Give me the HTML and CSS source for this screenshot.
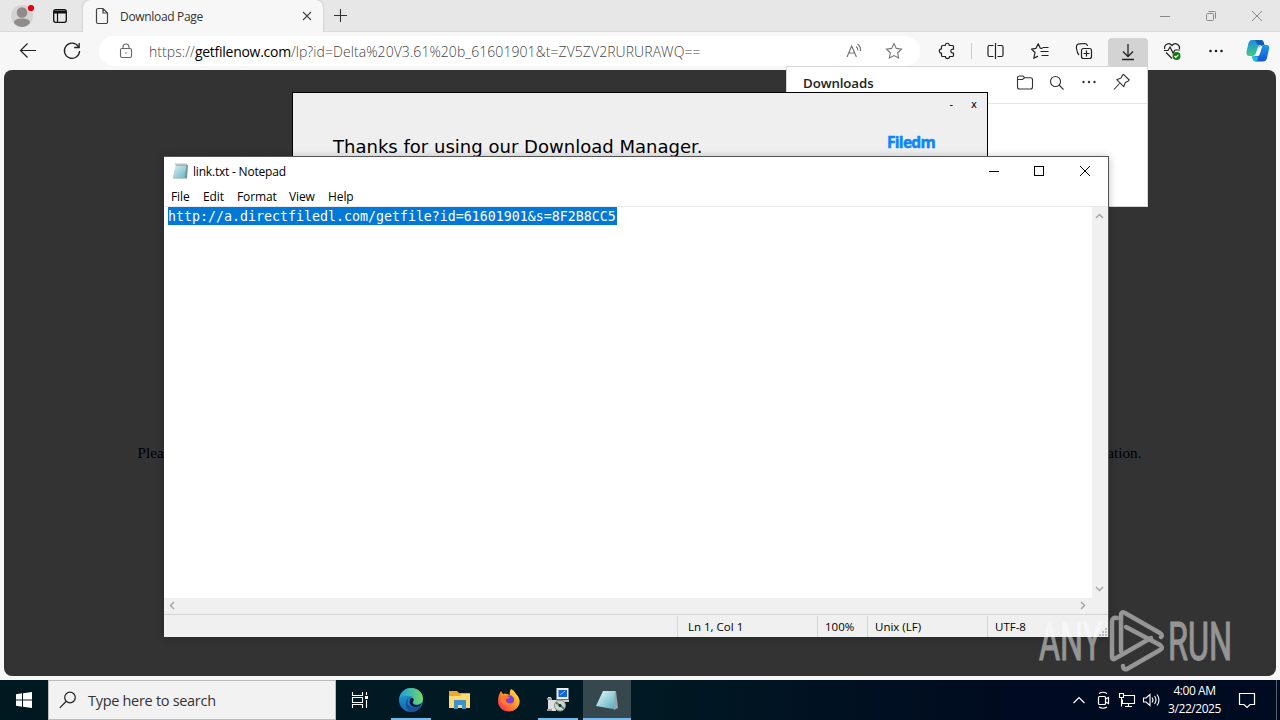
FILE: index.html
```html
<!DOCTYPE html>
<html lang="en">
<head>
<meta charset="utf-8">
<title>Download Page</title>
<link rel="stylesheet" href="styles.css">
</head>
<body>
<div class="desktop">
  <main class="browser">
    <div class="tabstrip">
      <svg class="profile" width="24" height="28" viewBox="0 0 24 28"><circle cx="11" cy="16" r="11" fill="#d5d3d2"/><circle cx="11" cy="12.500" r="5.300" fill="#8f8c8b"/><path d="M3 23c0-3.500 3.500-4.500 8-4.500s8 1 8 4.500c-2 2.500-5 4-8 4s-6-1.500-8-4z" fill="#8f8c8b"/><circle cx="20" cy="8" r="3.100" fill="#e3000f"/></svg>
      <svg class="workspaces" width="16" height="16" viewBox="0 0 16 16" fill="none" stroke="#111"><rect x="1.700" y="1.700" width="12.600" height="12.600" rx="2" stroke-width="1.300"/><path d="M2 4h12" stroke-width="3"/><path d="M5.500 4v10" stroke-width="1.200"/></svg>
      <div class="tab">
        <svg width="14" height="18" viewBox="0 0 14 18" fill="none" stroke="#444" stroke-width="1.200"><path d="M3 1.500h5l4.500 4.500v9a1.500 1.500 0 0 1-1.500 1.500H3A1.500 1.500 0 0 1 1.500 15V3A1.500 1.500 0 0 1 3 1.500zM8 1.500V6h4.500"/></svg>
        <span class="tab-title">Download Page</span>
        <svg class="tab-close" width="10" height="10" viewBox="0 0 10 10" stroke="#444" stroke-width="1.100"><path d="M1 1l8 8M9 1l-8 8"/></svg>
      </div>
      <svg class="new-tab" width="15" height="15" viewBox="0 0 15 15" stroke="#333" stroke-width="1.100"><path d="M7.500 1v13M1 7.500h13"/></svg>
      <div class="window-buttons">
        <svg width="46" height="32" viewBox="0 0 46 32" stroke="#888"><path d="M18 16.500h10"/></svg>
        <svg width="46" height="32" viewBox="0 0 46 32" fill="none" stroke="#888"><rect x="18.500" y="13.500" width="7" height="7" rx="1"/><path d="M20.500 11.500h6q1 0 1 1v6"/></svg>
        <svg width="46" height="32" viewBox="0 0 46 32" stroke="#888"><path d="M18 11l10 10M28 11l-10 10"/></svg>
      </div>
    </div>
    <div class="toolbar">
      <svg class="nav" width="44" height="38" viewBox="0 0 44 38" fill="none" stroke="#222" stroke-width="1.200"><path d="M36 18.500H20.500M27.500 11.500l-7 7 7 7"/></svg>
      <svg class="nav" width="44" height="38" viewBox="0 0 44 38" fill="none" stroke="#222" stroke-width="1.300"><path d="M34.300 14.500A7.600 7.600 0 1 0 35.600 19M35.200 11v4.500h-5"/></svg>
      <div class="address">
        <svg class="lock" width="14" height="16" viewBox="0 0 14 16" fill="none" stroke="#666" stroke-width="1.100"><rect x="1.500" y="5.500" width="11" height="9" rx="1.500"/><path d="M4 5.500V4a3 3 0 0 1 6 0v1.500"/><circle cx="7" cy="10" r=".8" fill="#666" stroke="none"/></svg>
        <span class="url">https://<b>getfilenow.com</b>/lp?id=Delta%20V3.61%20b_61601901&amp;t=ZV5ZV2RURURAWQ==</span>
        <svg class="read" width="18" height="16" viewBox="0 0 18 16" fill="none" stroke="#707070" stroke-width="1.100"><path d="M2 14L6.700 3 11.400 14M3.700 10h6"/><path d="M11 3.500q2 1.500 2 4M12.500 1q3.500 2.500 3 7"/></svg>
        <svg class="star" width="18" height="18" viewBox="0 0 18 18" fill="none" stroke="#777" stroke-width="1.100"><path d="M9 1.500l2.300 4.900 5.200.7-3.800 3.700.9 5.300L9 13.600l-4.600 2.500.9-5.300-3.800-3.700 5.200-.7z"/></svg>
      </div>
      <svg class="tool ext" width="44" height="38" viewBox="0 0 44 38" fill="none" stroke="#222" stroke-width="1.200" stroke-linejoin="round"><path d="M17.500 13.500h2.800c-.5-3 4.400-3 3.900 0h3.300q1 0 1 1v2.700c-3.600-.6-3.600 4.300 0 3.800v2.500q0 1-1 1h-3c.4 2.700-4.500 2.700-4 0h-3q-1 0-1-1V21c-2.900.4-2.900-4.400 0-4v-2.500q0-1 1-1z"/></svg>
      <i class="divider"></i>
      <svg class="tool" width="44" height="38" viewBox="0 0 44 38" fill="none" stroke="#222" stroke-width="1.200"><path d="M20.500 13.500h-4q-1.500 0-1.500 1.500v8q0 1.500 1.500 1.500h4M24.500 13.500h4q1.500 0 1.500 1.500v8q0 1.500-1.500 1.500h-4M22.500 11v16"/></svg>
      <svg class="tool" width="45" height="38" viewBox="0 0 45 38" fill="none" stroke="#222" stroke-width="1.200" stroke-linejoin="round"><path d="M25.500 16.600l-2.200-.4-2.100-4.500-2.200 4.600-4.500.8 3.500 3.400-1.200 5.800 4.200-2.200M25.500 15.500h6M23.500 19.500h8M24.500 23.500h7"/></svg>
      <svg class="tool" width="44" height="38" viewBox="0 0 44 38" fill="none" stroke="#222" stroke-width="1.200"><rect x="19.500" y="16.500" width="10" height="10" rx="2"/><path d="M24.500 18.500v6M21.500 21.500h6M17 23c-1-1-2-3-2.500-6.500-.5-3 .5-4.500 3-4.700l5-.3q2.500 0 3 2.500"/></svg>
      <svg class="tool active" width="40" height="31" viewBox="0 0 40 31" fill="none" stroke="#222" stroke-width="1.300"><path d="M20 6V18.500M15 13.500l5 5 5-5M14 21.500h12"/></svg>
      <svg class="tool" width="44" height="38" viewBox="0 0 44 38" fill="none" stroke="#222" stroke-width="1.200"><path d="M14.700 17c-1-4 4-7.500 7.300-3.500 3.300-4 8.300-.5 7.500 3.500M16 20.500l6 6M14 18.500h4l2-3.500 3 6 2-3h5"/><circle cx="26.500" cy="24" r="4" fill="#107c10" stroke="none"/><path d="M24.500 24l1.300 1.300 2.500-2.500" stroke="#fff"/></svg>
      <svg class="tool" width="44" height="38" viewBox="0 0 44 38" fill="#222"><circle cx="16.500" cy="19" r="1.300"/><circle cx="22" cy="19" r="1.300"/><circle cx="27.500" cy="19" r="1.300"/></svg>
      <svg class="tool copilot" width="40" height="38" viewBox="0 0 40 38"><defs><linearGradient id="cpa" x2="0" y2="1"><stop stop-color="#1b8fdc"/><stop offset="1" stop-color="#3fcb86"/></linearGradient><linearGradient id="cpb" x2="0" y2="1"><stop stop-color="#1f9ae9"/><stop offset="1" stop-color="#1654d0"/></linearGradient></defs><path d="M14 8h9q2 0 2.500 2l1 3h-4q-2 0-3 3l-1.500 5q-1 3-3.500 3h-3q-3.500 0-3-4l2-9q1-3 3.500-3z" fill="url(#cpa)"/><path d="M17 8h6q2 0 2.500 2l1 3h-5q-2 0-3-2z" fill="#155bb2"/><path d="M26 13h2q4 0 3 4l-2 9q-1 3.500-4 3.500h-7q-2.500 0-3-2l-1-3h2q2 0 3-3.500l1.500-5q1-3 3-3z" fill="url(#cpb)"/><path d="M14 24.500h6l-1 5h-1q-2.500 0-3-2z" fill="#22bde0"/><path d="M22.500 14h1.800l-2.300 7.500q-.6 2.500-2.500 2.500h-2l2.500-7z" fill="#fff"/></svg>
    </div>
    <div class="page"><p class="notice"><span>Please</span><span>installation.</span></p></div>
  </main>

  <section class="downloads">
    <header class="downloads-head">
      <h2>Downloads</h2>
      <svg width="32" height="32" viewBox="0 0 32 32" fill="none" stroke="#333" stroke-width="1.100"><path d="M8.500 11q0-2 2-2h3q1 0 1.500 1l.5.800h6q2 0 2 2V20q0 2-2 2h-11q-2 0-2-2zM8.500 12.500h5l2-1.700"/></svg>
      <svg width="32" height="32" viewBox="0 0 32 32" fill="none" stroke="#333" stroke-width="1.100"><circle cx="14.500" cy="14.500" r="5"/><path d="M18 18l4.500 4.500"/></svg>
      <svg width="32" height="32" viewBox="0 0 32 32" fill="#333"><circle cx="10.500" cy="15" r="1.200"/><circle cx="16" cy="15" r="1.200"/><circle cx="21.500" cy="15" r="1.200"/></svg>
      <svg width="34" height="32" viewBox="0 0 34 32" fill="none" stroke="#333" stroke-width="1.100" stroke-linejoin="round"><path d="M18.500 7.300l5.700 5.700-1.200 1.300-2.700 1.200-1.600 4.200-7-7 4.300-1.600 1.300-2.600zM14.500 16.500L9 22.500"/></svg>
    </header>
  </section>

  <section class="manager">
    <div class="manager-buttons"><span>-</span><span>x</span></div>
    <div class="manager-body"><h1>Thanks for using our Download Manager.</h1><span class="brand">Filedm</span></div>
  </section>

  <section class="notepad">
    <div class="np-title">
      <svg width="17" height="17" viewBox="0 0 17 17"><defs><linearGradient id="np" x2="1" y2="1"><stop stop-color="#d9f0f0"/><stop offset="1" stop-color="#6ab5c0"/></linearGradient></defs><path d="M4 2h12l-1 13.500H1.500z" fill="#6f9599"/><path d="M3.500 2.500h11L12.500 15H.8z" fill="url(#np)"/><path d="M4 2v-1.500M6 2V.5M8 2V.5M10 2V.5M12 2V.5M14 2V.5" stroke="#666" stroke-width=".8"/></svg>
      <span>link.txt - Notepad</span>
      <div class="np-buttons">
        <svg width="45" height="28" viewBox="0 0 45 28" stroke="#000"><path d="M17 13.500h10"/></svg>
        <svg width="46" height="28" viewBox="0 0 46 28" fill="none" stroke="#000"><rect x="17.500" y="8.500" width="9" height="9"/></svg>
        <svg width="45" height="28" viewBox="0 0 45 28" stroke="#000" stroke-width="1"><path d="M17 8l10 10M27 8l-10 10"/></svg>
      </div>
    </div>
    <nav class="np-menu"><span class="m-file">File</span><span class="m-edit">Edit</span><span class="m-format">Format</span><span class="m-view">View</span><span class="m-help">Help</span></nav>
    <div class="np-main">
      <div class="np-text"><span class="selection">http://a.directfiledl.com/getfile?id=61601901&amp;s=8F2B8CC5</span></div>
      <div class="vscroll">
        <svg width="9" height="6" viewBox="0 0 9 6" fill="none" stroke="#a6a6a6" stroke-width="1.500"><path d="M1 5l3.500-3.500L8 5"/></svg>
        <svg width="9" height="6" viewBox="0 0 9 6" fill="none" stroke="#a6a6a6" stroke-width="1.500"><path d="M1 1l3.500 3.500L8 1"/></svg>
      </div>
    </div>
    <div class="hscroll">
      <svg width="6" height="9" viewBox="0 0 6 9" fill="none" stroke="#a6a6a6" stroke-width="1.500"><path d="M5 1L1.500 4.500 5 8"/></svg>
      <svg width="6" height="9" viewBox="0 0 6 9" fill="none" stroke="#a6a6a6" stroke-width="1.500"><path d="M1 1l3.500 3.500L1 8"/></svg>
    </div>
    <footer class="np-status"><span class="s-pos">Ln 1, Col 1</span><span class="s-zoom">100%</span><span class="s-eol">Unix (LF)</span><span class="s-enc">UTF-8</span>
      <svg width="9" height="9" viewBox="0 0 9 9" fill="#bbb"><path d="M6 0h2v2H6zM6 3h2v2H6zM3 3h2v2H3zM0 6h2v2H0zM3 6h2v2H3zM6 6h2v2H6z"/></svg>
    </footer>
  </section>

  <svg class="watermark" width="240" height="73" viewBox="0 0 240 73">
    <g fill="#fff" stroke="#fff" stroke-width="1.100" font-family="Roboto, sans-serif" font-size="53"><text x="4" y="53" textLength="63" lengthAdjust="spacingAndGlyphs">ANY</text><text x="133" y="53" textLength="64" lengthAdjust="spacingAndGlyphs">RUN</text></g>
    <g fill="none" stroke="#fff" stroke-width="4.500" stroke-linejoin="round" stroke-linecap="round"><path d="M82 11q-5-1-5 4v34q0 5 4 2l35-20"/><path d="M86 44V8q0-4 4-2l35 20q3 2 1 4"/><path d="M91 20l34 18q4 3 0 5L92 62q-4 1-4-3"/></g>
  </svg>

  <footer class="taskbar">
    <div class="start"><svg width="16" height="16" viewBox="0 0 16 16" fill="#fff"><path d="M0 2.200L6 1.300V7.500H0zM7 1.200L16 0V7.500H7zM0 8.500h6v6.200L0 13.800zM7 8.500h9V16l-9-1.200z"/></svg></div>
    <div class="search"><svg width="18" height="18" viewBox="0 0 18 18" fill="none" stroke="#222" stroke-width="1.200"><circle cx="11" cy="6.500" r="5.300"/><path d="M7 10.500L.8 16.800"/></svg><span>Type here to search</span></div>
    <div class="app taskview"><svg width="18" height="18" viewBox="0 0 18 18" fill="none" stroke="#fff" stroke-width="1.100"><path d="M1.500 1v3.500h10V1M1.500 17v-3.500h10V17M1.500 6.500h10v5h-10zM15.500 1v3M15.500 9v8"/><path d="M14 5h3v3h-3z" fill="#fff" stroke="none"/></svg></div>
    <div class="app edge running"><svg width="24" height="24" viewBox="0 0 24 24"><defs><linearGradient id="ea"><stop stop-color="#229bdc"/><stop offset="1" stop-color="#70db64"/></linearGradient><linearGradient id="eb" x2="0" y2="1"><stop stop-color="#1ba2d7"/><stop offset="1" stop-color="#1668b5"/></linearGradient></defs><circle cx="12" cy="12" r="12" fill="url(#eb)"/><path d="M.5 10C2 3 7 0 12 0c7 0 12 5 12 10.500 0 4-3 6-6.500 6-3 0-4-1.500-3-3 .8-1 .7-5-3.500-5.500C7 7.500 2.500 8 .5 10z" fill="url(#ea)"/><path d="M11 9c-4 3-3 9 2 10 3 .7 6 .3 9-1.500C20 21 16 24 12.500 24 8 22 6 18 7 14c.5-2.500 2-4.500 4-5z" fill="#1a4f9c"/><path d="M12 10c3 0 3 2 2 3.500-1 1.700 0 3.500 3.500 3.500 2 0 4-.5 5.500-2-1 3-4 4.500-7 4-5-.5-7-5.500-4-9z" fill="#06192a"/></svg></div>
    <div class="app"><svg width="24" height="22" viewBox="0 0 24 22"><path d="M1 2h8l2 2h11v15H1z" fill="#e9aa2f"/><path d="M1 7h11l2-2h8v14H1z" fill="#ffda72"/><path d="M6 11h12v9h-4v-4h-4v4H6z" fill="#3f91d0"/></svg></div>
    <div class="app"><svg width="24" height="24" viewBox="0 0 24 24"><defs><linearGradient id="ff" x1="1" x2="0" y2="1"><stop stop-color="#fff047"/><stop offset=".5" stop-color="#ff9028"/><stop offset="1" stop-color="#ef1765"/></linearGradient></defs><path d="M14 1c4 2 4 4 6 6q2 2 2.500 5c1 6-4 11.500-10.500 11.500C5 23.500 1 18.500 1 13c0-4 1-7 3-10l2 3q2-1 4 0l3 1q-1-3 1-6z" fill="url(#ff)"/><circle cx="12.500" cy="12" r="4.700" fill="#7e3fd0"/><path d="M5 8c4-2 5 1 8 1-1 2-4 1-4 3 0 4 5 4 8 2-2 5-12 5-13-1z" fill="#ff7a28"/></svg></div>
    <div class="app running"><svg width="24" height="24" viewBox="0 0 24 24"><path d="M10.500 0h12v11h-12z" fill="#eee"/><path d="M12.500 2h8.500v7h-8.500z" fill="#1562df"/><path d="M14 7l5-4" stroke="#72cfff"/><path d="M10 11.500h13v2.500H10z" fill="#ccc"/><path d="M2 9h3v14H2zM5 12h5v11H5z" fill="#ddd"/><path d="M1 10h5v2H1zM1 21h5v2H1z" fill="#999"/><circle cx="14" cy="17.500" r="5.500" fill="#c6d9ca" stroke="#888"/><path d="M14 17.500l-4-3M14 17.500l4 3" stroke="#50846b" stroke-width="2"/><circle cx="14" cy="17.500" r="1.500" fill="#223"/></svg></div>
    <div class="app current running"><svg width="24" height="24" viewBox="0 0 24 24"><defs><linearGradient id="nb" x2="1" y2="1"><stop stop-color="#eafafa"/><stop offset="1" stop-color="#54adc0"/></linearGradient></defs><path d="M10 3h11l2 17-4 2z" fill="#8eaab0"/><path d="M8 3h12l-2 18-17-3z" fill="url(#nb)"/></svg></div>
    <div class="tray">
      <svg width="24" height="24" viewBox="0 0 24 24" fill="none" stroke="#fff" stroke-width="1.200"><path d="M6.500 15l5.500-5.500 5.500 5.500"/></svg>
      <svg width="24" height="24" viewBox="0 0 24 24" fill="none" stroke="#fff" stroke-width="1.200"><rect x="7.500" y="8.500" width="7" height="8" rx="1"/><path d="M14.500 11l3-1.500v6l-3-1.500M8 5.500q4-2.500 8 0M8 19q4 2.500 8 0"/></svg>
      <svg width="24" height="24" viewBox="0 0 24 24" fill="none" stroke="#fff" stroke-width="1.100"><path d="M9 7.500h10.500v8H7.500v-4M4.500 5.500h4v4h-4zM6.500 9.500v9M13.500 15.500v3M10 18.500h7"/></svg>
      <svg width="24" height="24" viewBox="0 0 24 24" fill="none" stroke="#fff" stroke-width="1.100"><path d="M4.500 10h2.500l4-3.500v11L7 14H4.500zM13 9.500q2 2.500 0 5M15.500 8q3 4 0 8M18 6.500q4 5.500 0 11"/></svg>
      <div class="clock"><span class="time">4:00 AM</span><span class="date">3/22/2025</span></div>
      <svg class="action" width="18" height="18" viewBox="0 0 18 18" fill="none" stroke="#fff" stroke-width="1.200"><path d="M1.500 2.500h15v11H12l-3 3-3-3H1.500z"/></svg>
      <i class="peek"></i>
    </div>
  </footer>
</div>
</body>
</html>
```
FILE: styles.css
```css
* { box-sizing: border-box; }
body { margin: 0; font-family: "Open Sans", "Noto Sans", sans-serif; }
svg { display: block; flex: none; }
.desktop { position: relative; width: 1280px; height: 720px; overflow: hidden; display: flex; flex-direction: column; }
.browser { height: 680px; background: #f7f7f7; display: flex; flex-direction: column; }
.tabstrip { height: 32px; background: #e7e7e7; border-bottom: 1px solid #dadada; display: flex; align-items: flex-start; }
.profile { margin-left: 11px; }
.workspaces { margin: 8px 15px 0 17px; }
.tab { width: 240px; height: 32px; background: #f7f7f7; border-radius: 7px 7px 0 0; box-shadow: 0 0 2px #aaa; clip-path: inset(0 -3px 0 -3px); display: flex; align-items: center; padding: 0 11px 0 12px; }
.tab-title { font-size: 12px; letter-spacing: -.32px; color: #333; margin-left: 11px; }
.tab-close { margin-left: auto; }
.new-tab { margin: 8px 0 0 10px; }
.window-buttons { margin-left: auto; display: flex; }
.toolbar { height: 38px; display: flex; align-items: center; }
.address { width: 821px; height: 30px; margin-left: 11px; background: #fff; border-radius: 15px; display: flex; align-items: center; padding: 0 17px 0 20px; }
.url { font-size: 14px; font-weight: 300; color: #444; letter-spacing: .07px; margin-left: 16px; white-space: nowrap; }
.url b { color: #000; font-weight: 400; letter-spacing: -.27px; }
.read { margin-left: auto; }
.star { margin-left: 22px; }
.ext { margin-left: 5px; }
.divider { width: 1px; height: 16px; margin: 0 1px 0 2px; background: #ccc; }
.active { margin: 4px 2px 0; background: #d3d3d3; border-radius: 4px 4px 0 0; }
.page { flex: 1; margin: 0 4px 4px; background: #333; border-radius: 8px; display: flex; justify-content: center; align-items: flex-start; }
.notice { display: flex; justify-content: space-between; width: 1004px; margin: 374px 0 0 -1px; font: 15.200px "Liberation Serif", serif; white-space: nowrap; color: #000; }
.downloads { position: absolute; left: 786px; top: 66px; width: 362px; height: 141px; background: #fff; border: 1px solid #d5d5d5; }
.downloads-head { height: 37px; border-bottom: 1px solid #e5e5e5; display: flex; align-items: center; padding: 0 8px 4px 16px; }
.downloads-head h2 { margin: 0 auto 0 0; font-size: 13.300px; font-weight: 600; color: #222; letter-spacing: -.1px; }
.manager { position: absolute; left: 292px; top: 92px; width: 696px; height: 80px; background: #efefef; border: 1px solid #000; }
.manager-buttons { display: flex; justify-content: flex-end; gap: 18px; padding: 5px 10px 1px 0; font: 10px/14px "DejaVu Sans", sans-serif; }
.manager-body { display: flex; justify-content: space-between; padding: 22px 52px 0 40px; }
.manager h1 { margin: 0; font: 18.040px/24px "DejaVu Sans", sans-serif; }
.brand { color: #0b86ff; font-weight: 700; font-size: 15.500px; line-height: 14px; letter-spacing: -.7px; -webkit-text-stroke: .5px #0b86ff; }
.notepad { position: absolute; left: 164px; top: 156px; width: 945px; height: 481px; background: #fff; border: 1px solid #555; border-left: 0; border-bottom: 0; display: flex; flex-direction: column; font-size: 12px; box-shadow: 0 1px 8px rgba(0,0,0,.25); }
.np-title { height: 29px; display: flex; align-items: center; padding-left: 8px; }
.np-title > span { margin-left: 4px; letter-spacing: -.2px; }
.np-buttons { margin-left: auto; display: flex; }
.np-menu { height: 20px; display: flex; align-items: center; padding-left: 7px; letter-spacing: -.1px; }
.np-menu span { white-space: nowrap; }
.m-file { width: 32px; }
.m-edit { width: 34px; }
.m-format { width: 52px; }
.m-view { width: 39px; }
.np-main { flex: 1; display: flex; border-top: 1px solid #e9e9e9; }
.np-text { flex: 1; padding-left: 4px; }
.selection { display: block; width: 449px; height: 18px; line-height: 20px; background: #0078d7; color: #fff; font-family: "DejaVu Sans Mono", monospace; font-size: 13.290px; }
.vscroll { width: 16px; background: #f0f0f0; display: flex; flex-direction: column; align-items: center; justify-content: space-between; padding: 6px 1px 6px 0; }
.hscroll { height: 16px; background: #f0f0f0; display: flex; align-items: center; justify-content: space-between; padding: 0 22px 2px 5px; }
.np-status { height: 23px; background: #f0f0f0; border-top: 1px solid #d5d5d5; display: flex; justify-content: flex-end; align-items: center; font-size: 11.500px; }
.np-status span { height: 21px; line-height: 22px; border-left: 1px solid #d5d5d5; padding-left: 7px; white-space: nowrap; }
.np-status .s-pos { width: 140px; padding-left: 10px; }
.np-status .s-eol { width: 120px; }
.np-status .s-zoom { width: 50px; }
.np-status .s-enc { width: 112px; }
.np-status svg { align-self: flex-end; }
.watermark { position: absolute; left: 1035px; top: 607px; opacity: .48; }
.taskbar { height: 40px; background: linear-gradient(90deg, #001921, #001923 50%, #000a20 80%, #000b22); display: flex; }
.start { width: 48px; display: flex; align-items: center; justify-content: center; }
.search { width: 288px; background: #f2f2f2; border: 1px solid #bbb; display: flex; align-items: center; padding-left: 10px; font-size: 14.500px; color: #333; }
.search span { margin-left: 11px; letter-spacing: -.3px; }
.app { width: 49px; display: flex; align-items: center; justify-content: center; }
.taskview { padding-right: 2px; }
.edge { width: 50px; margin: 0 -1px 0 1px; }
.running { background: linear-gradient(#76b9ed, #76b9ed) center bottom / 40px 2px no-repeat; }
.current { background: linear-gradient(#76b9ed, #76b9ed) center bottom / 48px 2px no-repeat #37474e; width: 48px; margin-left: 1px; }
.tray { margin-left: auto; display: flex; align-items: center; color: #fff; }
.clock { width: 64px; display: flex; flex-direction: column; align-items: center; font-size: 12px; line-height: 18px; letter-spacing: -.45px; padding-right: 1px; }
.action { margin: 0 20px 0 11px; }
.peek { width: 1px; height: 40px; background: #576071; margin-right: 3px; }
```
